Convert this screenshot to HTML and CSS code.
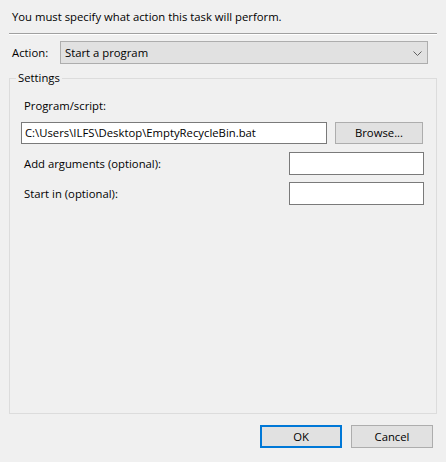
FILE: index.html
```html
<!DOCTYPE html>
<html>
<head>
<meta charset="utf-8">
<link rel="stylesheet" href="styles.css">
</head>
<body>
<div class="dialog">
  <div class="msg">You must specify what action this task will perform.</div>
  <div class="sep"></div>
  <div class="action-row">
    <span class="action-label">Action:</span>
    <div class="select">
      <span>Start a program</span>
      <svg class="chev" width="9" height="5" viewBox="0 0 9 5"><polyline points="0.5,0.5 4.5,4.5 8.5,0.5" fill="none" stroke="#606060" stroke-width="1"/></svg>
    </div>
  </div>
  <fieldset class="group">
    <legend>Settings</legend>
    <div class="lbl prog-lbl">Program/script:</div>
    <div class="prog-row">
      <div class="input wide">C:\Users\ILFS\Desktop\EmptyRecycleBin.bat</div>
      <div class="btn browse">Browse...</div>
    </div>
    <div class="opt-row">
      <span class="lbl">Add arguments (optional):</span>
      <div class="input small"></div>
    </div>
    <div class="opt-row second">
      <span class="lbl">Start in (optional):</span>
      <div class="input small"></div>
    </div>
  </fieldset>
  <div class="footer">
    <div class="btn ok">OK</div>
    <div class="btn cancel">Cancel</div>
  </div>
</div>
</body>
</html>
```
FILE: styles.css
```css
html, body {
  margin: 0;
  padding: 0;
  background: #f0f0f0;
}
.dialog {
  width: 446px;
  height: 462px;
  display: flex;
  flex-direction: column;
  font-family: "Open Sans", "Noto Sans", sans-serif;
  font-size: 11.3px;
  line-height: 16px;
  color: #000;
  box-sizing: border-box;
}
.msg {
  padding: 9px 0 0 12px;
  height: 16px;
}
.sep {
  margin: 8px 9px 0 9px;
  border-top: 1px solid #a0a0a0;
  border-bottom: 1px solid #ffffff;
}
.action-row {
  display: flex;
  align-items: center;
  margin: 6px 0 0 12px;
}
.action-label {
  width: 48px;
}
.select {
  width: 368px;
  height: 23px;
  box-sizing: border-box;
  border: 1px solid #adadad;
  background: #e1e1e1;
  display: flex;
  align-items: center;
  justify-content: space-between;
  padding: 0 5px 0 4px;
}
.chev {
  display: block;
  margin-top: 1px;
}
.group {
  flex: 1;
  margin: 6px 9px 0 9px;
  padding: 0 12px 0 11px;
  border: 1px solid #dcdcdc;
  min-width: 0;
}
.group legend {
  margin-left: -5px;
  padding: 0 2px;
  line-height: 16px;
}
.lbl {
  padding-left: 3px;
}
.prog-lbl {
  margin-top: 12px;
}
.prog-row {
  display: flex;
  gap: 8px;
  margin-top: 8px;
  align-items: flex-start;
}
.input {
  height: 22px;
  box-sizing: border-box;
  border: 1px solid #7a7a7a;
  background: #fff;
  padding: 0 3px;
  line-height: 20px;
  white-space: nowrap;
  overflow: hidden;
}
.wide {
  width: 306px;
}
.btn {
  box-sizing: border-box;
  height: 22px;
  border: 1px solid #adadad;
  background: #e1e1e1;
  text-align: center;
  line-height: 20px;
}
.browse {
  width: 88px;
}
.opt-row {
  display: flex;
  justify-content: space-between;
  align-items: center;
  margin-top: 8px;
}
.opt-row.second {
  margin-top: 7px;
}
.small {
  width: 135px;
  height: 23px;
}
.footer {
  display: flex;
  justify-content: flex-end;
  gap: 9px;
  padding: 11px 13px 14px 0;
}
.ok {
  width: 82px;
  height: 23px;
  border: 2px solid #0078d7;
  line-height: 19px;
}
.cancel {
  width: 82px;
  height: 23px;
  line-height: 21px;
}
```
